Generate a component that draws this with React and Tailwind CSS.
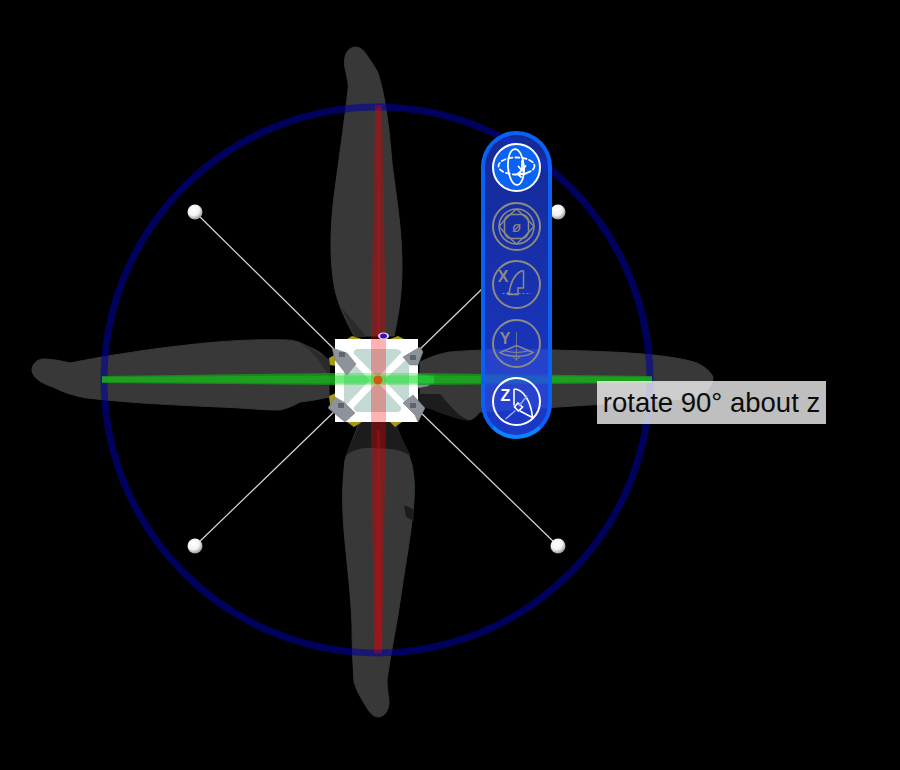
import React from "react";

const ringStroke = "#0000a0";

// the drone seen from above, with the gizmo ring and axes
const Scene = () => (
    <svg className="absolute inset-0" width="900" height="770" viewBox="0 0 900 770">
        <defs>
            <radialGradient id="ball" cx="40%" cy="35%" r="70%">
                <stop offset="0%" stopColor="#ffffff" />
                <stop offset="55%" stopColor="#f2f2f2" />
                <stop offset="100%" stopColor="#8a8a8a" />
            </radialGradient>
        </defs>

        {/* blades */}
        <g fill="#383838" stroke="#383838" strokeWidth="1" strokeLinejoin="round">
            <path d="M355 47 C347 48 343 56 345 68 C347 78 349 84 348 90 C344 125 338 165 333 205 C330 235 330 265 335 290 C339 308 347 322 354 336 L394 336 C397 322 402 300 402 265 C402 230 396 195 392 163 C389 125 385 95 378 73 C374 65 370 60 368 57 C364 50 360 47 355 47 Z" />
            <path d="M360 420 C356 432 350 445 345 460 C342 485 342 505 344 530 C347 565 351 595 352 625 C352 645 353 665 354 682 C357 692 362 700 367 708 C371 715 375 717 379 717 C385 716 389 710 389 702 C388 693 387 686 387 680 C391 650 397 625 401 595 C406 560 412 530 414 500 C415 485 414 475 412 465 C408 450 400 438 394 420 Z" />
            <path d="M329 361 C322 352 312 348 307 346 C300 342 293 340 287 340 C255 339 220 341 187 345 C150 349 105 356 70 363 C62 361 52 359 43 359 C35 360 32 365 32 371 C33 377 40 383 53 387 C62 392 75 396 87 398 C130 403 175 405 220 407 C245 408 262 410 280 410 C288 408 295 405 300 402 C310 401 320 399 329 397 Z" />
            <path d="M420 362 C428 358 438 354 450 352 C485 349 520 349 553 350 C590 351 625 352 653 355 C670 357 685 359 697 363 C705 367 711 372 713 377 C713 384 708 392 700 398 L480 412 C476 417 472 420 468 420 C458 416 449 405 440 394 L420 394 Z" />
        </g>

        {/* darker roots of the blades next to the hub */}
        <g fill="#1c1c1c">
            <path d="M360 422 L394 422 C400 436 406 446 411 456 C395 446 385 450 372 448 C362 447 354 450 346 455 C350 445 356 434 360 422 Z" />
            <path d="M404 505 L413 509 L414 521 L406 517 Z" />
            <path d="M418 394 L440 394 C449 405 458 416 470 421 C455 420 440 412 418 405 Z" />
            <path d="M300 342 L330 360 L330 378 C320 360 312 352 300 342 Z" fill="#2a2a2a" />
            <path d="M355 337 C350 326 346 318 342 308 C352 320 360 328 366 337 Z" fill="#2a2a2a" />
        </g>

        {/* yellow parts peeking out behind the hub */}
        <g fill="#a89a10">
            <path d="M344 341 L352 336 L362 339 Z" />
            <path d="M390 339 L398 336 L408 341 Z" />
            <path d="M329 358 L336 354 L336 366 L330 365 Z" />
            <path d="M329 396 L336 393 L336 406 L330 404 Z" />
            <path d="M347 422 L362 422 L354 427 Z" />
            <path d="M390 422 L402 422 L395 427 Z" />
        </g>

        {/* arms */}
        <g stroke="#d8d8d8" strokeWidth="1.2">
            <line x1="195" y1="212" x2="338" y2="353" />
            <line x1="483" y1="288" x2="416" y2="353" />
            <line x1="195" y1="546" x2="338" y2="408" />
            <line x1="558" y1="546" x2="416" y2="408" />
        </g>
        <circle cx="195" cy="212" r="7.5" fill="url(#ball)" />
        <circle cx="558" cy="212" r="7.5" fill="url(#ball)" />
        <circle cx="195" cy="546" r="7.5" fill="url(#ball)" />
        <circle cx="558" cy="546" r="7.5" fill="url(#ball)" />

        {/* hub */}
        <rect x="335" y="339" width="83" height="83" fill="#ffffff" />
        <g fill="#c2d9d4">
            <path d="M357 349 L396 349 Q402 350 401 353 L380 375 L375 375 L354 354 Q353 350 357 349 Z" />
            <path d="M344 358 Q345 355 348 358 L370 380 L348 403 Q345 405 344 402 Z" />
            <path d="M408 358 Q409 355 409 360 L409 402 Q408 405 406 403 L384 380 Z" />
            <path d="M375 385 L380 385 L401 407 Q402 412 396 412 L357 412 Q353 411 354 407 Z" />
        </g>

        {/* brackets */}
        <g fill="#8d929b" stroke="#6d727a" strokeWidth="0.5">
            <path d="M332 348 L347 353 L356 364 L347 375 L335 360 Z" />
            <path d="M403 357 L420 347 L423 352 L418 365 L410 365 Z" />
            <path d="M335 397 L345 403 L355 413 L345 422 L328 408 Z" />
            <path d="M403 403 L413 395 L425 408 L418 422 L415 415 Z" />
            <path d="M418 374 L428 375 L435 380 L428 386 L418 388 Z" />
        </g>
        <g fill="#5f646c">
            <rect x="339" y="352" width="6" height="5" />
            <rect x="410" y="355" width="6" height="5" />
            <rect x="338" y="403" width="6" height="5" />
            <rect x="410" y="403" width="6" height="5" />
        </g>

        {/* gizmo ring and axes, much paler where they cross the white hub */}
        <circle cx="377" cy="380" r="273" fill="none" stroke={ringStroke} strokeWidth="7" opacity="0.58" />
        <path d="M375 105 L382 105 L386 339 L371 339 Z M371 422 L386 422 L382 653 L374 653 Z" fill="#e00000" opacity="0.38" />
        <path d="M377 108 L380 108 L380 335 L377 335 Z M377 430 L380 430 L382 650 L375 650 Z" fill="#e00010" opacity="0.3" />
        <rect x="371" y="339" width="15" height="83" fill="#ff0000" opacity="0.3" />
        <path d="M102 376 L335 373 L335 385 L102 383 Z M418 373 L652 376 L652 383 L418 385 Z" fill="#17991a" opacity="0.8" />
        <path d="M102 377 L335 375.5 L335 383.5 L102 382 Z M418 375.5 L652 377 L652 382 L418 383.5 Z" fill="#1fc01f" opacity="0.45" />
        <rect x="335" y="373" width="83" height="12" fill="#00e000" opacity="0.3" />
        <rect x="335" y="375.5" width="99" height="8" fill="#20e040" opacity="0.45" />
        <circle cx="378" cy="380" r="4.5" fill="#d05a10" />
        <ellipse cx="383.5" cy="336" rx="5.5" ry="3.5" fill="#f4d8e0" />
        <ellipse cx="383.5" cy="336" rx="3.5" ry="2.5" fill="#3010c0" />
    </svg>
);

const RotateFreeIcon = () => (
    <svg width="49" height="49" viewBox="0 0 49 49" fill="none" stroke="#ffffff" strokeLinecap="round" strokeWidth="1.8">
        <ellipse cx="24" cy="24" rx="8" ry="18" transform="rotate(-4 24 24)" />
        <ellipse cx="24.5" cy="23" rx="18" ry="8.5" strokeDasharray="4 3" />
        <path d="M30 18 L30 27 M26.5 23.5 L30 27.5 L33.5 23" />
        <path d="M34 30.5 L26 31 M29 28 L25.5 31 L29 34" />
    </svg>
);

const RotateBallIcon = () => (
    <svg width="49" height="49" viewBox="0 0 49 49" fill="none" stroke="#8b8a84" strokeWidth="1.5">
        <circle cx="24.5" cy="24.5" r="17.5" />
        <rect x="12.5" y="12.5" width="24" height="24" rx="7" />
        <path d="M24.5 7 Q34 15 42 24.5 Q34 34 24.5 42 Q15 34 7 24.5 Q15 15 24.5 7 Z" />
        <text x="24.5" y="29.5" textAnchor="middle" fontSize="15" fontStyle="italic" fontFamily="Liberation Sans, sans-serif" fill="#8b8a84" stroke="none">ø</text>
    </svg>
);

const RotateXIcon = () => (
    <svg width="49" height="49" viewBox="0 0 49 49" fill="none" stroke="#8b8a84" strokeWidth="1.5">
        <text x="11" y="21.5" textAnchor="middle" fontSize="16" fontWeight="700" fontFamily="Liberation Sans, sans-serif" fill="#8b8a84" stroke="none">X</text>
        <path d="M17 34.5 C18 24 22 15 29 11 L31.5 11 L31.5 28 L26 28 L26 34.5 Z" />
        <path d="M10.5 33.5 L39 33.5" strokeDasharray="2 2" strokeWidth="1" />
        <circle cx="16.5" cy="33.5" r="1.8" fill="#8b8a84" stroke="none" />
    </svg>
);

const RotateYIcon = () => (
    <svg width="49" height="49" viewBox="0 0 49 49" fill="none" stroke="#8b8a84" strokeWidth="1.5">
        <text x="13" y="25" textAnchor="middle" fontSize="16" fontWeight="700" fontFamily="Liberation Sans, sans-serif" fill="#8b8a84" stroke="none">Y</text>
        <path d="M24.5 13 L24.5 42" strokeWidth="1" opacity="0.7" />
        <path d="M8 33.5 L24.5 26.5 L41 33.5 C34 38.5 15 38.5 8 33.5 Z" />
        <path d="M12 31.5 C20 34 29 34 37 31.5" strokeWidth="1" />
        <path d="M21 38 L24.5 40.5 L28 38" strokeWidth="1" />
    </svg>
);

const RotateZIcon = () => (
    <svg width="49" height="49" viewBox="0 0 49 49" fill="none" stroke="#ffffff" strokeWidth="1.6">
        <text x="13.5" y="23.5" textAnchor="middle" fontSize="16" fontWeight="700" fontFamily="Liberation Sans, sans-serif" fill="#ffffff" stroke="none">Z</text>
        <path d="M22 12 C31 12 39 24 40.5 40.5 L28 34 M22 12 L22 28.5" />
        <path d="M26 26 L30.5 30 L26.5 34 L22.5 30 Z" />
        <path d="M27 29 L35 19" stroke="#8fa6f5" />
        <path d="M23.5 33.5 L13.5 42" stroke="#8fa6f5" />
    </svg>
);

const ToolButton = ({ active, filled, children }) => (
    <div
        className={`relative w-[49px] h-[49px] shrink-0 rounded-full border-2 flex items-center justify-center ${
            filled ? "bg-[#0a63f2]" : ""
        } ${active ? "border-white" : "border-[#8b8a84]"}`}
    >
        <div className="absolute -inset-[2px]">{children}</div>
    </div>
);

const App = () => {
    return (
        <div className="relative w-[900px] h-[770px] bg-black overflow-hidden">
            <Scene />

            {/* rotate tool palette */}
            <div className="absolute left-[481px] top-[131px] w-[71px] h-[308px] rounded-[36px] border-4 border-[#0a62f5] border-b-[#0a85ff] bg-gradient-to-b from-[#2246fa]/60 to-[#2246fa]/80 flex flex-col items-center pt-[8px] gap-[9.5px]">
                <ToolButton active filled><RotateFreeIcon /></ToolButton>
                <ToolButton><RotateBallIcon /></ToolButton>
                <ToolButton><RotateXIcon /></ToolButton>
                <ToolButton><RotateYIcon /></ToolButton>
                <ToolButton active><RotateZIcon /></ToolButton>
            </div>

            {/* tooltip */}
            <div className="absolute left-[597px] top-[381px] w-[229px] h-[43px] bg-white/75 flex items-center justify-center text-[27.5px] text-[#0c0c0c] font-['Liberation_Sans',sans-serif] whitespace-nowrap">
                rotate 90° about z
            </div>
        </div>
    );
};

export default App;
